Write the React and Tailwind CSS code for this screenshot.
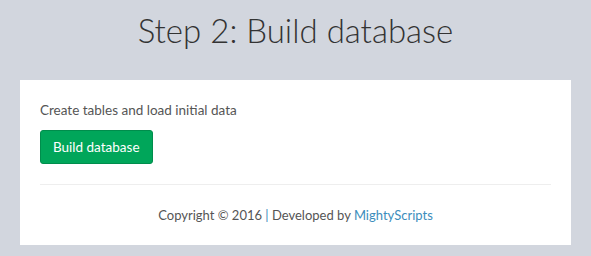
export default function App() {
  return (
    <div className="min-h-screen bg-[#d2d6de] pt-[5px] font-['Lato','Open_Sans',sans-serif] text-[#333]">
      <h1 className="text-center text-[33px] font-light leading-[50px] text-[#333]">Step 2: Build database</h1>
      <div className="mx-[20px] mt-[25px] bg-white px-[20px] pt-[20px] pb-[20px]">
        <p className="text-[13.5px] leading-[20px] text-[#555]">Create tables and load initial data</p>
        <button
          type="button"
          className="mt-[10px] h-[34px] rounded-[3px] border border-[#008d4c] bg-[#00a65a] px-[12px] text-[13.5px] text-white"
        >
          Build database
        </button>
        <hr className="mt-[20px] border-[#eee]" />
        <p className="mt-[20px] text-center text-[13px] leading-[20px] text-[#555]">
          Copyright © 2016 <span className="text-[#3c8dbc]">|</span> Developed by{' '}
          <a href="#" className="text-[#3c8dbc]">MightyScripts</a>
        </p>
      </div>
    </div>
  );
}
